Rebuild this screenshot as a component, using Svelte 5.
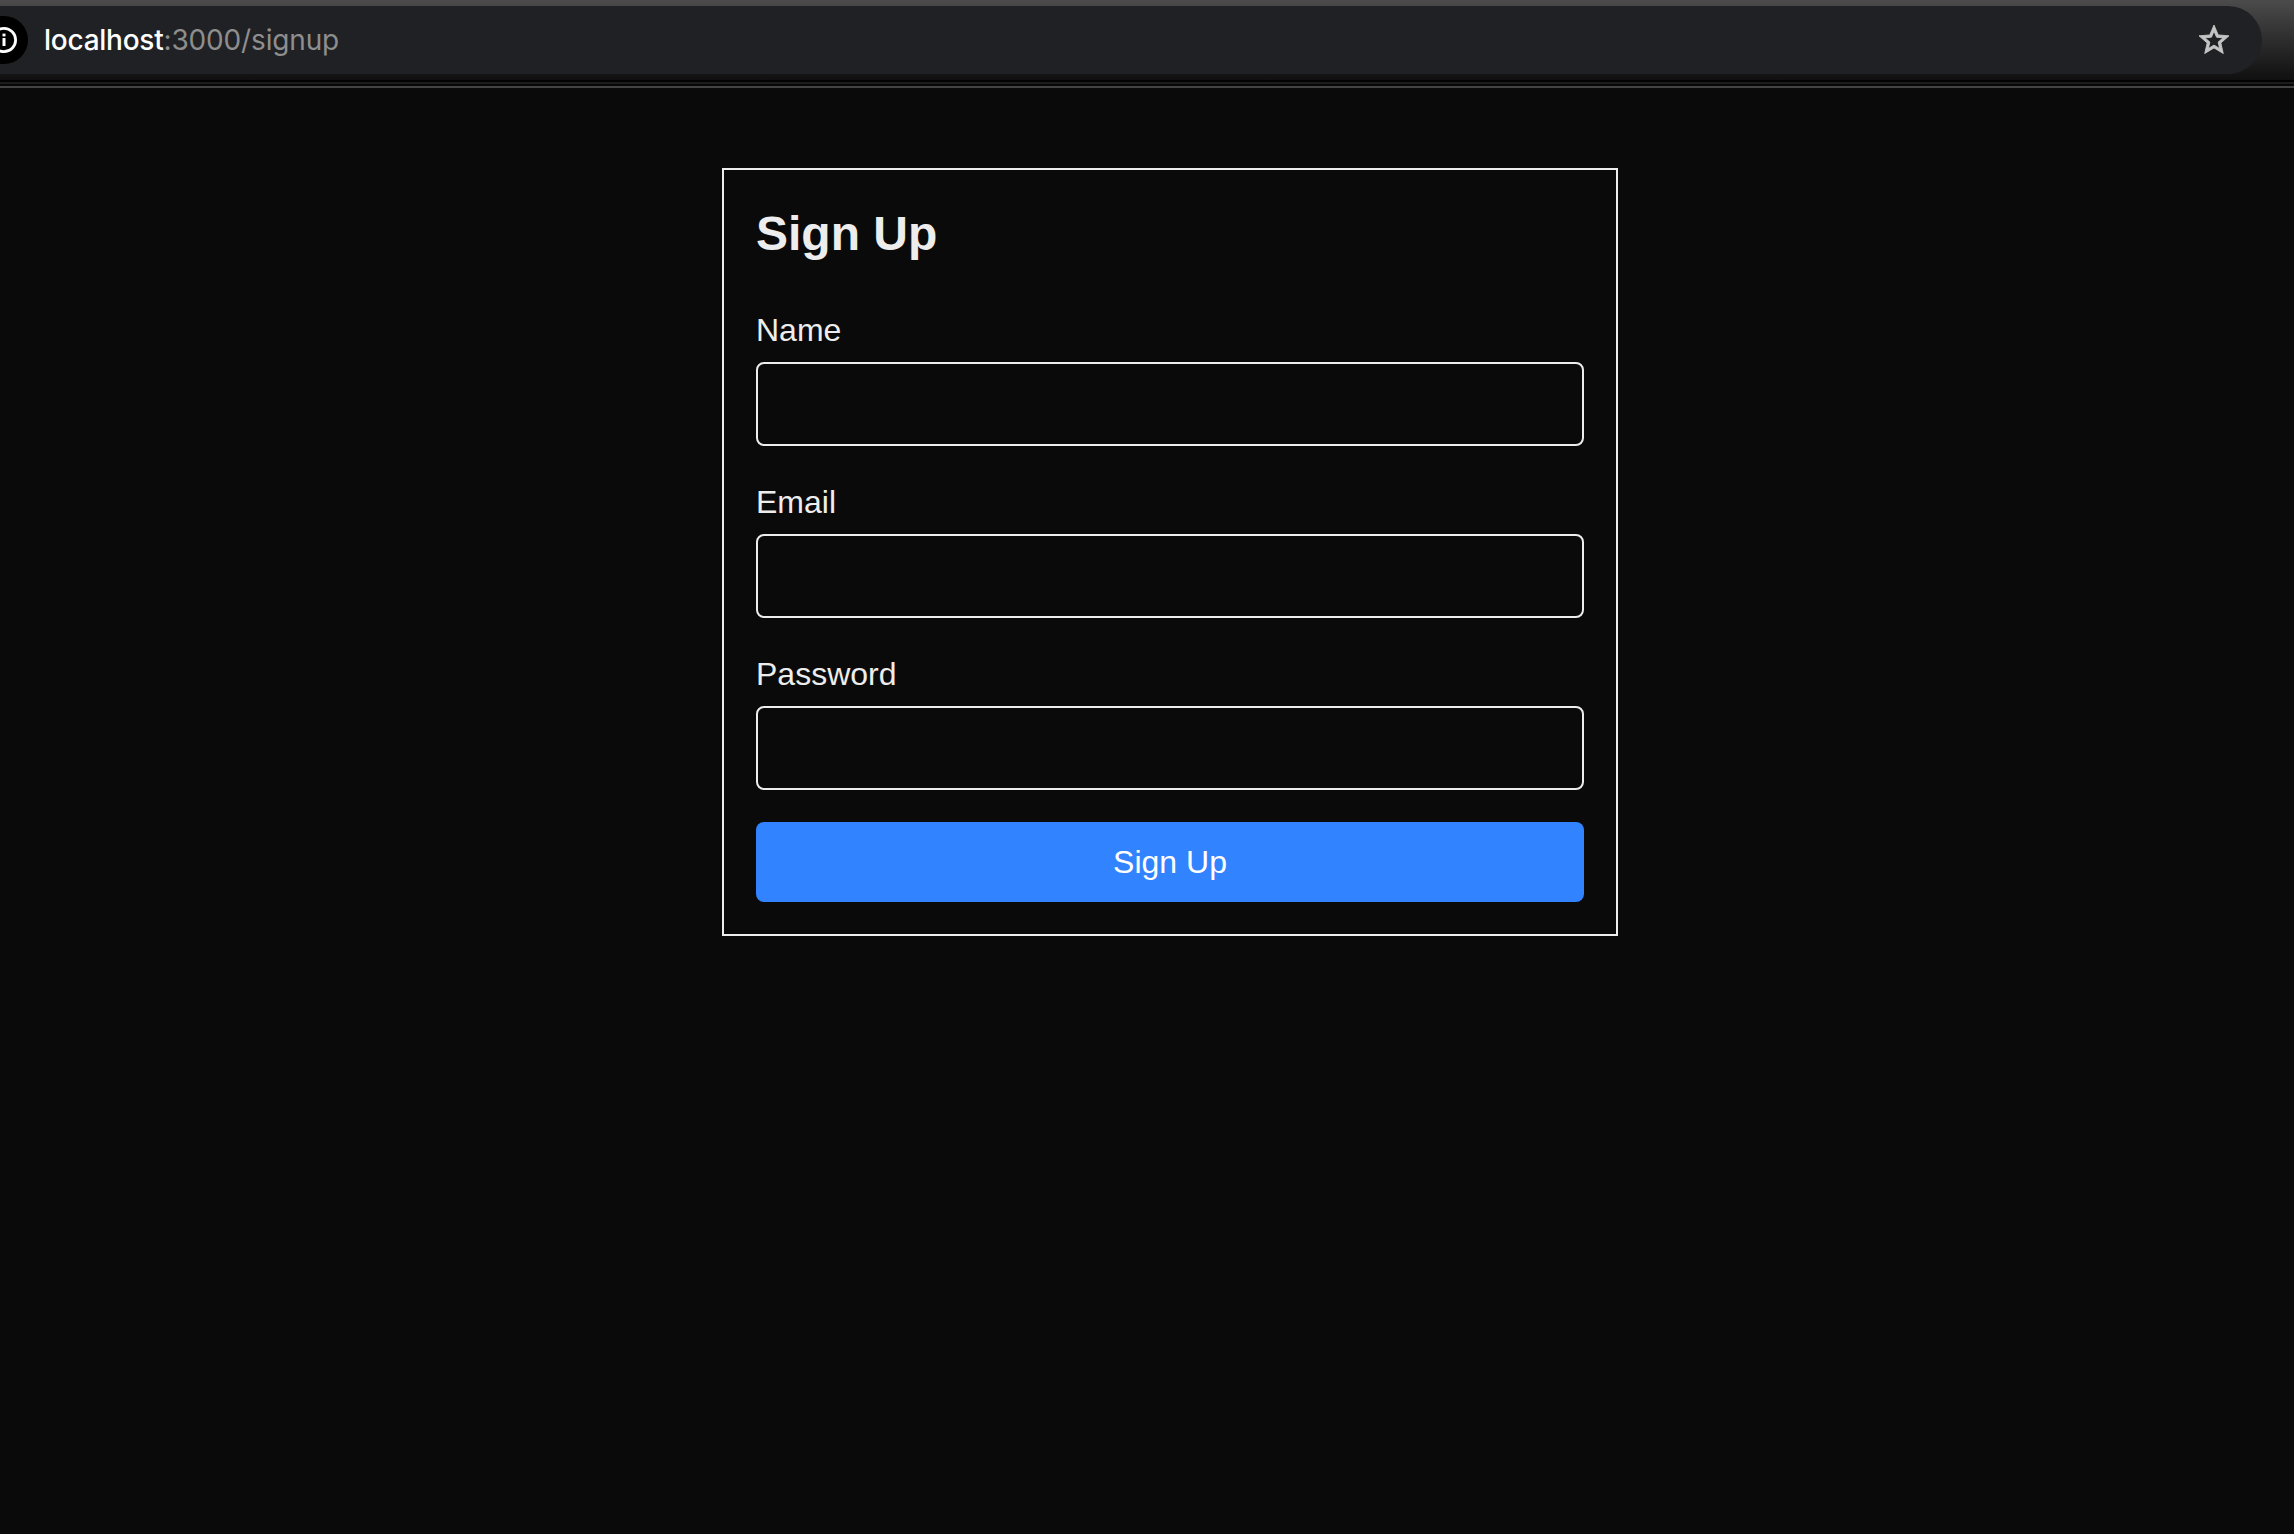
<script>
  const fields = [
    { id: 'name', label: 'Name', type: 'text' },
    { id: 'email', label: 'Email', type: 'email' },
    { id: 'password', label: 'Password', type: 'password' }
  ];
</script>

<div class="window">
  <header class="toolbar">
    <div class="omnibox">
      <div class="info">
        <svg viewBox="0 0 26 26" width="26" height="26" fill="none" stroke="#fff">
          <circle cx="13" cy="13" r="11.6" stroke-width="2.8" />
          <path d="M13 11V19" stroke-width="3" />
          <path d="M13 6.6V9.4" stroke-width="3" />
        </svg>
      </div>
      <div class="url"><span class="host">localhost</span><span class="rest">:3000/signup</span></div>
      <svg class="star" viewBox="0 0 24 24" width="36" height="36" fill="#c4c4c4" stroke="#c4c4c4" stroke-width="0.6">
        <path d="M22 9.24l-7.19-.62L12 2 9.19 8.63 2 9.24l5.46 4.73L5.82 21 12 17.27 18.18 21l-1.63-7.03L22 9.24zM12 15.4l-3.76 2.27 1-4.28-3.32-2.88 4.38-.38L12 6.1l1.71 4.04 4.38.38-3.32 2.88 1 4.28L12 15.4z" />
      </svg>
    </div>
  </header>
  <div class="edge"></div>
  <main>
    <form class="card">
      <h1>Sign Up</h1>
      {#each fields as field}
        <div class="field">
          <label for={field.id}>{field.label}</label>
          <input id={field.id} type={field.type} />
        </div>
      {/each}
      <button type="button">Sign Up</button>
    </form>
  </main>
</div>

<style>
  :global(body) {
    background: #0a0a0a;
  }
  .window {
    height: 1534px;
    overflow: hidden;
    background: #0a0a0a;
    font-family: 'Liberation Sans', Arial, sans-serif;
    color: #ededed;
  }
  .toolbar {
    box-sizing: border-box;
    height: 80px;
    padding: 6px 32px 0 0;
    background: linear-gradient(#4b4b4b, #141414 74px, #101010);
  }
  .omnibox {
    box-sizing: border-box;
    display: flex;
    align-items: center;
    height: 68px;
    padding-right: 30px;
    border-radius: 0 34px 34px 0;
    background: #202124;
  }
  .info {
    box-sizing: border-box;
    display: flex;
    align-items: center;
    justify-content: flex-end;
    width: 28px;
    height: 48px;
    padding-right: 11px;
    border-radius: 0 24px 24px 0;
    background: #000;
  }
  .info svg {
    flex: none;
  }
  .url {
    flex: 1;
    margin-left: 16px;
    font-family: Inter, sans-serif;
    font-size: 28px;
    line-height: 34px;
    white-space: nowrap;
  }
  .host {
    color: #fff;
    font-weight: 500;
    letter-spacing: -0.25px;
  }
  .rest {
    color: #8e8e8e;
    letter-spacing: -0.15px;
  }
  .edge {
    height: 8px;
    background: linear-gradient(#020202 0 2px, #1c1c1c 2px 4px, #070707 4px 6px, #434343 6px 8px);
  }
  main {
    display: flex;
    padding: 80px 0 0 722px;
  }
  .card {
    box-sizing: border-box;
    width: 896px;
    padding: 32px;
    border: 2px solid #ededed;
  }
  h1 {
    margin: 0 0 40px;
    font-size: 48px;
    line-height: 64px;
    font-weight: 700;
  }
  .field {
    display: flex;
    flex-direction: column;
    gap: 8px;
    margin-bottom: 32px;
  }
  label {
    font-size: 32px;
    line-height: 48px;
  }
  input {
    box-sizing: border-box;
    width: 100%;
    height: 84px;
    padding: 16px;
    border: 2px solid #ededed;
    border-radius: 8px;
    background: transparent;
    color: inherit;
    font: inherit;
    outline: none;
  }
  button {
    display: block;
    width: 100%;
    height: 80px;
    padding: 0;
    border: 0;
    border-radius: 8px;
    background: #3183ff;
    color: #fff;
    font-family: inherit;
    font-size: 32px;
    line-height: 48px;
  }
</style>
